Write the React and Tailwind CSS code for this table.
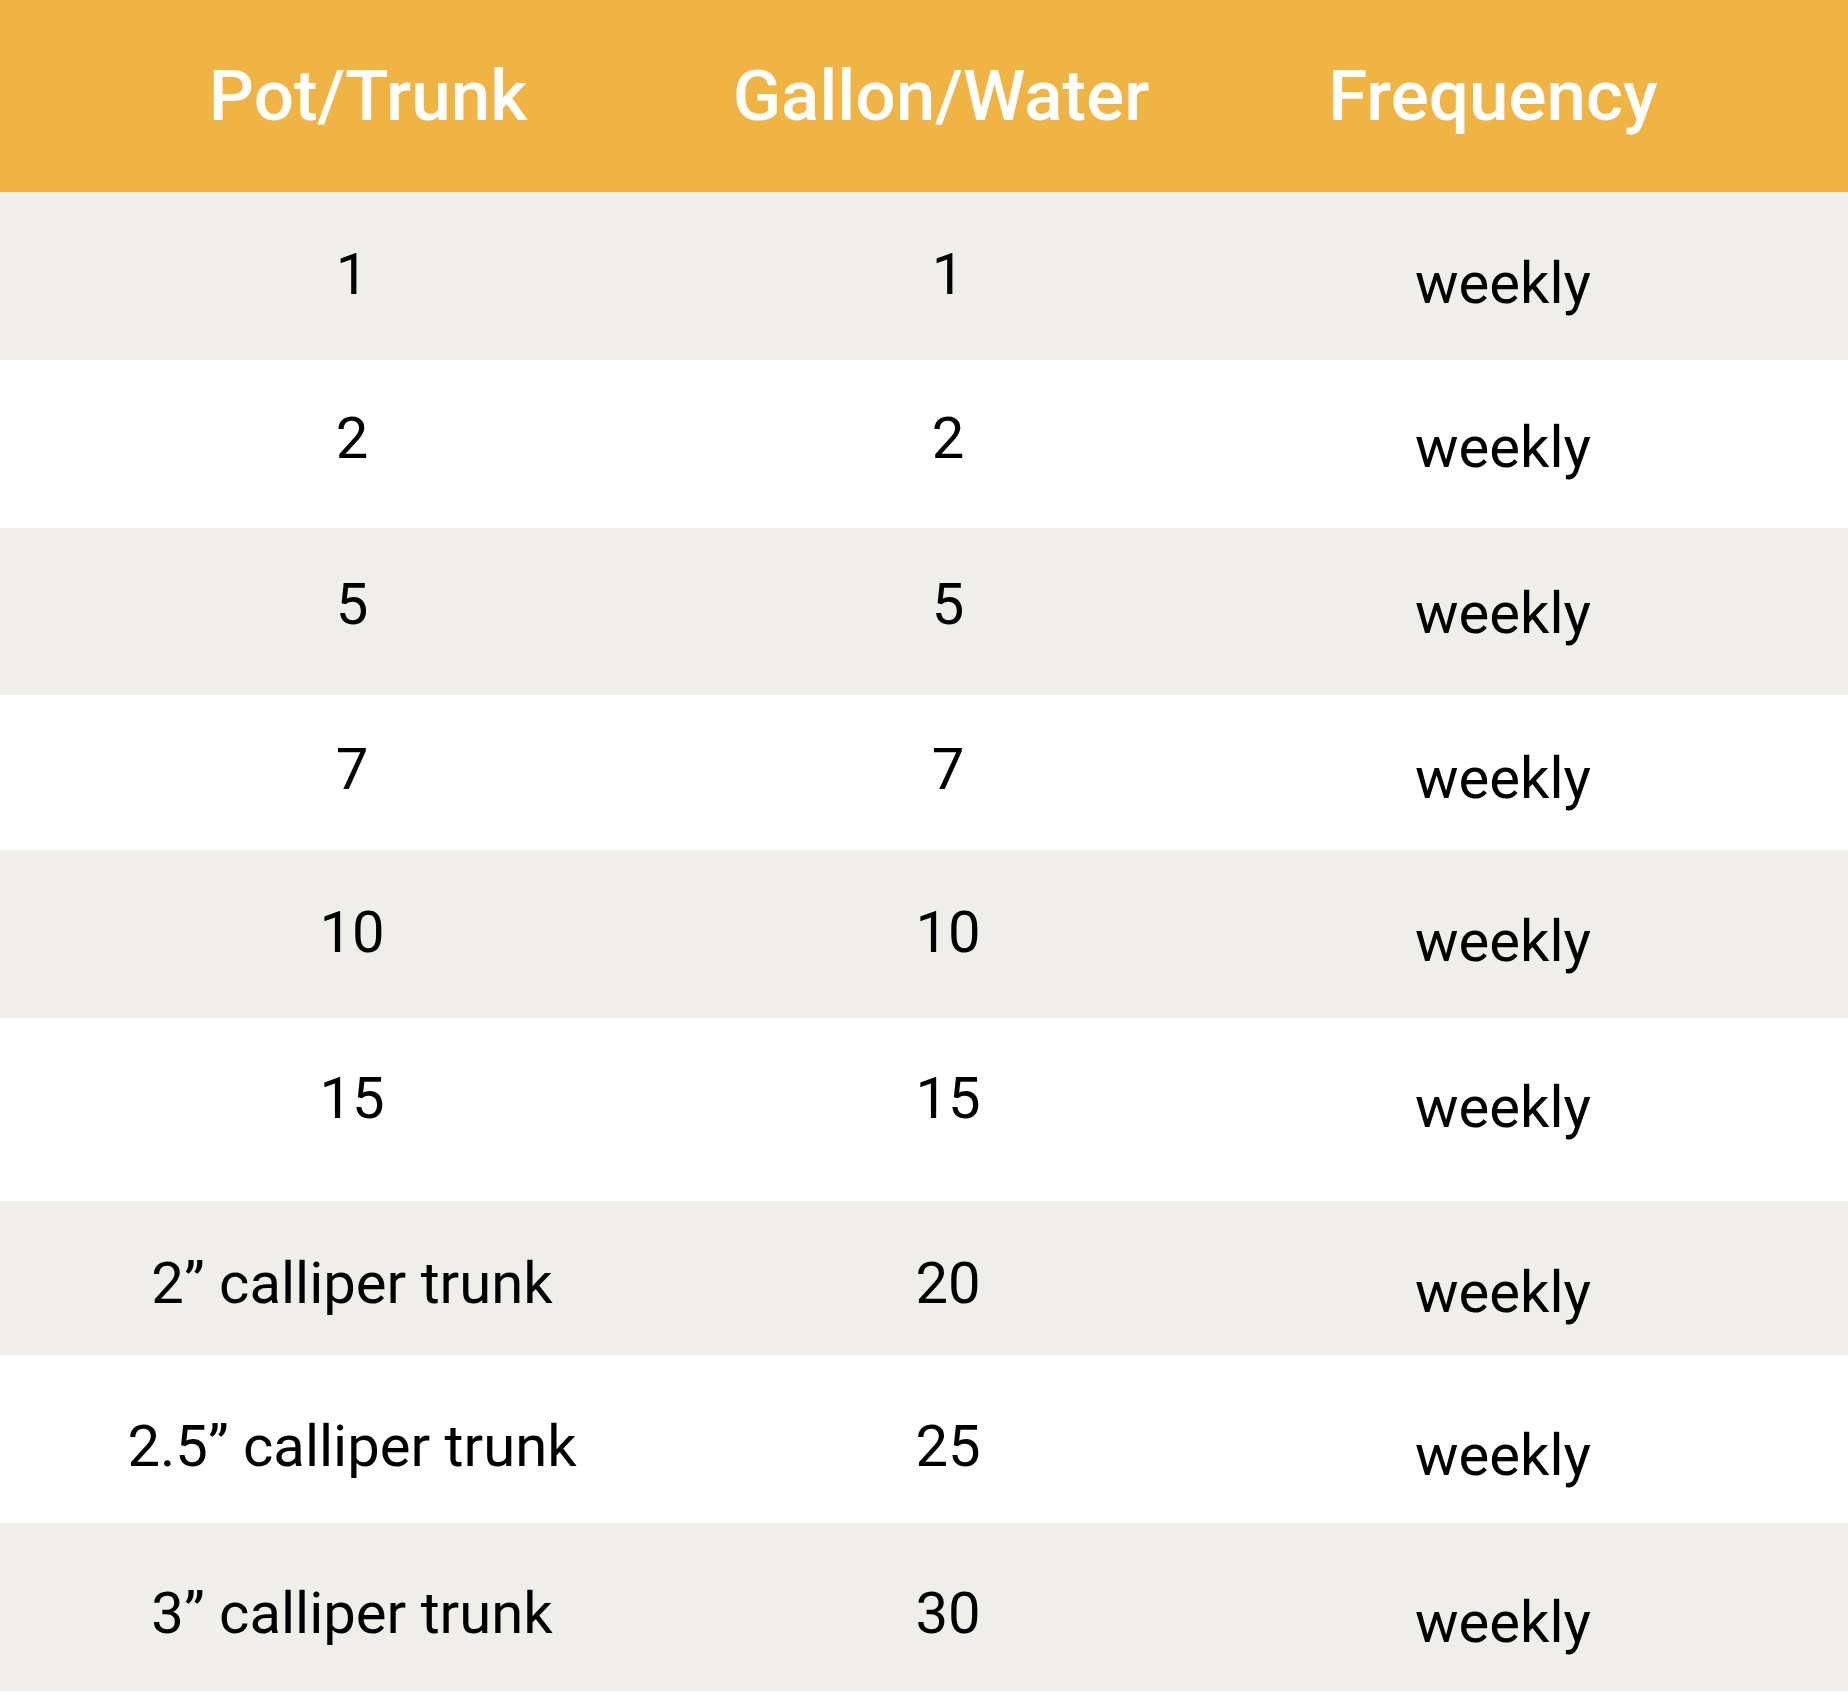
import React from "react";

const rows = [
  { pot: "1", gal: "1", h: "h-[168px]", pt: "pt-[53px]", bg: "bg-[#efeeea]" },
  { pot: "2", gal: "2", h: "h-[168px]", pt: "pt-[49px]", bg: "bg-white" },
  { pot: "5", gal: "5", h: "h-[167px]", pt: "pt-[47px]", bg: "bg-[#efeeea]" },
  { pot: "7", gal: "7", h: "h-[155px]", pt: "pt-[45px]", bg: "bg-white" },
  { pot: "10", gal: "10", h: "h-[168px]", pt: "pt-[53px]", bg: "bg-[#efeeea]" },
  { pot: "15", gal: "15", h: "h-[183px]", pt: "pt-[51px]", bg: "bg-white" },
  { pot: "2\u201d calliper trunk", gal: "20", h: "h-[154px]", pt: "pt-[53px]", bg: "bg-[#efeeea]" },
  { pot: "2.5\u201d calliper trunk", gal: "25", h: "h-[168px]", pt: "pt-[62px]", bg: "bg-white" },
  { pot: "3\u201d calliper trunk", gal: "30", h: "h-[168px]", pt: "pt-[61px]", bg: "bg-[#efeeea]" },
];

function App() {
  return (
    <div className="w-[1848px] min-h-[1696px] bg-white font-['Roboto','Liberation_Sans',sans-serif]">
      {/* header */}
      <div className="flex h-[192px] bg-[#efb443] pt-[60px] text-[71px] font-medium leading-none text-white">
        <div className="w-[704px] pl-[32px] text-center">Pot/Trunk</div>
        <div className="w-[484px] pr-[10px] text-center">Gallon/Water</div>
        <div className="w-[660px] pr-[50px] text-center">Frequency</div>
      </div>

      {rows.map((row, i) => (
        <div
          key={i}
          className={`flex ${row.h} ${row.pt} ${row.bg} text-[58px] leading-none text-black`}
        >
          <div className="w-[704px] text-center">{row.pot}</div>
          <div className="w-[486px] pl-[2px] text-center">{row.gal}</div>
          <div className="w-[658px] pr-[32px] pt-[9px] text-center">weekly</div>
        </div>
      ))}
    </div>
  );
}

export default App;
